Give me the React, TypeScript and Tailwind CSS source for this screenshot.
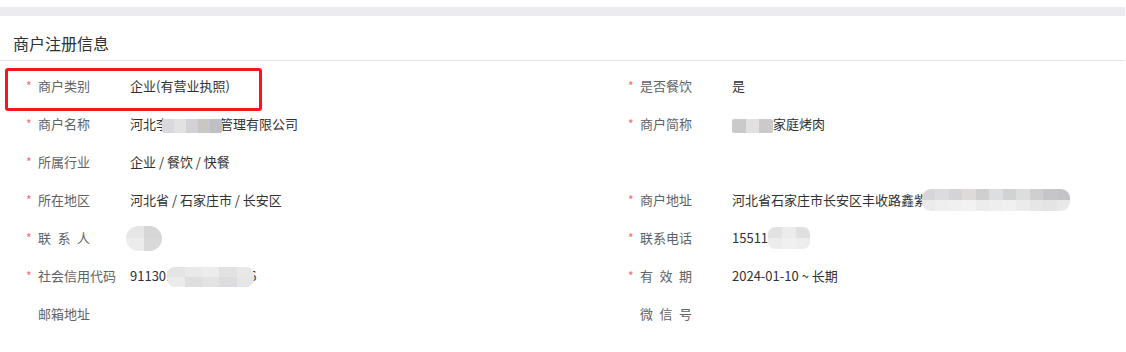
import React from 'react';

// Mosaic block that stands in for blurred private data
function Mosaic({ w, h, colors, rounded = 'rounded-[6px]', rows = 1 }: { w: number; h: number; colors: string[]; rounded?: string; rows?: number }) {
  const cols = Math.ceil(colors.length / rows);
  return (
    <span
      className={`inline-grid overflow-hidden align-middle blur-[0.6px] ${rounded}`}
      style={{ width: w, height: h, gridTemplateColumns: `repeat(${cols}, 1fr)` }}
    >
      {colors.map((c, i) => (
        <span key={i} style={{ background: c }} />
      ))}
    </span>
  );
}

interface Field {
  label: React.ReactNode;
  required: boolean;
  value?: React.ReactNode;
}

const left: Field[] = [
  { label: '商户类别', required: true, value: '企业(有营业执照)' },
  {
    label: '商户名称',
    required: true,
    value: (
      <>
        河北李
        <span className="-ml-[7px] inline-block align-[-2px]">
          <Mosaic w={60} h={14} rounded="rounded-[2px]" colors={['#d9d9dd', '#e2e2e2', '#d2d2d6', '#c9c7c4', '#bec0c3']} />
        </span>
        <span className="-ml-[2px]">管理有限公司</span>
      </>
    ),
  },
  { label: '所属行业', required: true, value: '企业 / 餐饮 / 快餐' },
  { label: '所在地区', required: true, value: '河北省 / 石家庄市 / 长安区' },
  {
    label: <span className="tracking-[6.5px]">联系人</span>,
    required: true,
    value: (
      <span className="-ml-[4px] inline-block">
        <Mosaic w={36} h={25} rows={2} rounded="rounded-full" colors={['#e6e6e6', '#d6d6d6', '#ececec', '#d9d9d9']} />
      </span>
    ),
  },
  {
    label: '社会信用代码',
    required: true,
    value: (
      <>
        911301
        <span className="-ml-[6px] inline-block">
          <Mosaic w={87} h={20} rows={2} rounded="rounded-[8px]" colors={['#e4e4e6', '#e9e9ea', '#ececec', '#e2e2e3', '#e8e8e8', '#ebebeb', '#dededf', '#e3e3e4', '#dddddf', '#e6e6e6']} />
        </span>
        <span className="-ml-[5px]">6</span>
      </>
    ),
  },
  { label: '邮箱地址', required: false },
];

const right: Field[] = [
  { label: '是否餐饮', required: true, value: '是' },
  {
    label: '商户简称',
    required: true,
    value: (
      <>
        <span className="inline-block">
          <Mosaic w={41} h={14} rounded="rounded-[2px]" colors={['#cacaca', '#e2e1e1', '#cbc9c9']} />
        </span>
        家庭烤肉
      </>
    ),
  },
  { label: '', required: false },
  {
    label: '商户地址',
    required: true,
    value: (
      <>
        河北省石家庄市长安区丰收路鑫紫
        <span className="-ml-[5px] inline-block">
          <Mosaic w={148} h={22} rows={2} rounded="rounded-[9px]" colors={['#d6d6d8', '#dcdcdc', '#d4d4d6', '#dedada', '#cfcfd0', '#dcdedf', '#d2d2d2', '#dcdddd', '#cfcfcf', '#c6c6c8', '#c4c4c6', '#eaeaea', '#efefef', '#f0f0f0', '#f2f2f2', '#ececec', '#eeeeee', '#f0f0f0', '#ebebeb', '#e6e6e6', '#e4e4e4', '#e9e9e9']} />
        </span>
      </>
    ),
  },
  {
    label: '联系电话',
    required: true,
    value: (
      <>
        15511
        <span className="inline-block">
          <Mosaic w={42} h={22} rows={2} rounded="rounded-[7px]" colors={['#e2e2e2', '#ebebeb', '#e0e0e0', '#ececec', '#f0f0f0', '#ededed']} />
        </span>
      </>
    ),
  },
  { label: <span className="tracking-[6.5px]">有效期</span>, required: true, value: '2024-01-10 ~ 长期' },
  { label: <span className="tracking-[6.5px]">微信号</span>, required: false },
];

function FieldRow({ field }: { field: Field }) {
  return (
    <div className="flex h-[38px] items-center">
      <span className="w-[38px] shrink-0 pl-[26px] text-[12px] leading-none text-[#f56c6c]">{field.required ? '*' : ''}</span>
      <span className="w-[92px] shrink-0 whitespace-nowrap text-[13px] text-[#606266]">{field.label}</span>
      <span className="flex items-center whitespace-nowrap text-[13px] text-[#303133]">{field.value}</span>
    </div>
  );
}

export default function App() {
  return (
    <div
      className="h-[352px] w-[1126px] overflow-hidden bg-white"
      style={{ fontFamily: '"Noto Sans CJK SC", "Noto Sans", sans-serif' }}
    >
      <div className="h-[7px] bg-white" />
      <div className="h-[9px] w-[1125px] bg-[#ececf0]" />

      {/* Header */}
      <div className="flex h-[44px] items-center pl-[13px] pt-[9px] text-[16px] text-[#303133]">商户注册信息</div>
      <div className="h-px w-[1125px] bg-[#e6e6e6]" />

      {/* Fields */}
      <div className="relative grid grid-cols-[602px_1fr] pt-[6px]">
        <div className="flex flex-col">
          {left.map((f, i) => (
            <FieldRow key={i} field={f} />
          ))}
        </div>
        <div className="flex flex-col">
          {right.map((f, i) => (
            <FieldRow key={i} field={f} />
          ))}
        </div>

        {/* Annotation box */}
        <div className="pointer-events-none absolute left-[5px] top-[7px] h-[43px] w-[257px] rounded-[3px] border-[3px] border-[#f5171a]" />
      </div>
    </div>
  );
}
